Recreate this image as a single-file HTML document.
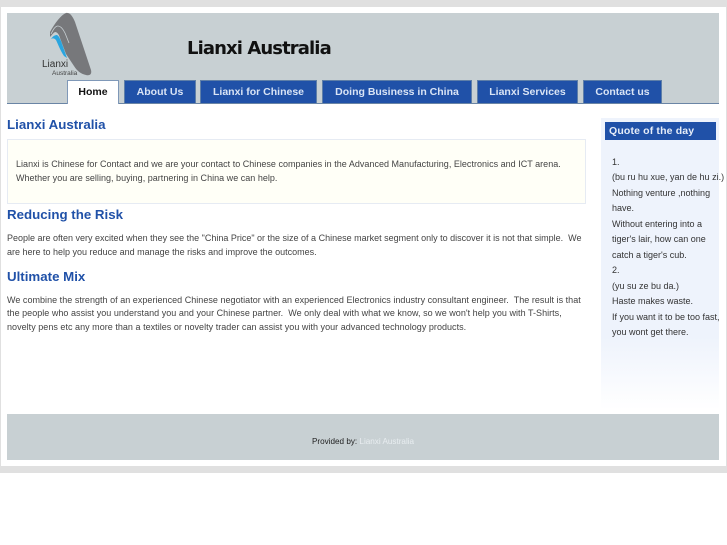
<!DOCTYPE html>
<html><head><meta charset="utf-8"><style>
html,body{margin:0;padding:0;background:#fff;}
body{width:727px;height:545px;position:relative;overflow:hidden;font-family:"Liberation Sans",sans-serif;color:#444;}
.a{position:absolute;white-space:nowrap;}
.tab{position:absolute;top:80px;height:23px;background:#2051a8;border:1px solid #5f7fa8;border-bottom:0;box-sizing:border-box;color:#d9e4f5;font:bold 10.5px/22px "Liberation Sans",sans-serif;text-align:center;}
h2{position:absolute;margin:0;left:7px;font:bold 13.3px/16px "Liberation Sans",sans-serif;color:#2051a8;white-space:nowrap;}
.t{position:absolute;left:7px;font-size:9px;line-height:15px;color:#444;white-space:nowrap;}
.s{position:absolute;left:612px;font-size:9px;line-height:15.5px;color:#333;white-space:nowrap;}
</style></head><body>
<div class="a" style="left:0;top:0;width:727px;height:473px;background:#e0e0e0"></div>
<div class="a" style="left:1px;top:7px;width:725px;height:459px;background:#fff"></div>
<div class="a" style="left:7px;top:13px;width:712px;height:90px;background:#c8d0d3"></div>
<div class="a" style="left:7px;top:103px;width:712px;height:1px;background:#6a85a5"></div>
<svg class="a" style="left:40px;top:12px" width="54" height="66" viewBox="0 0 54 66">
<path d="M10 20C15 11 21 3 26 1C30 0 33 5 35 10L51 58C52 62 50 64 46 63C41 62 37 59 34 54L26 42L20 26C19 22 17 20 15 20C13 21 12 23 10 25Z" fill="#77787b"/>
<path d="M11 22C13 18 15 14 18 14C21 14 23 17 25 21L29 31" fill="none" stroke="#c8d0d3" stroke-width=".8"/>
<path d="M11 27C13 24 15 23 17 23C19 24 20 27 21 29L27 46L24 44C20 38 18 32 16 28C14 26 13 26 11 27Z" fill="#2aa5df"/>
</svg>
<div class="a" style="left:42px;top:59px;font-size:10px;line-height:11px;color:#333">Lianxi</div>
<div class="a" style="left:52px;top:70px;font-size:6.5px;line-height:8px;color:#444">Australia</div>
<div class="a" style="left:187px;top:38px;font:bold 18px/22px 'DejaVu Sans',sans-serif;color:#111;letter-spacing:-.9px">Lianxi Australia</div>
<div class="tab" style="left:67px;width:52px;height:24px;background:#fff;color:#111;border-color:#7f98b8;border-bottom:0">Home</div>
<div class="tab" style="left:124px;width:72px">About Us</div>
<div class="tab" style="left:200px;width:117px">Lianxi for Chinese</div>
<div class="tab" style="left:322px;width:150px">Doing Business in China</div>
<div class="tab" style="left:477px;width:101px">Lianxi Services</div>
<div class="tab" style="left:583px;width:79px">Contact us</div>
<h2 style="top:117px">Lianxi Australia</h2>
<div class="a" style="left:7px;top:139px;width:577px;height:63px;background:#fffff7;border:1px solid #e6ebf3"></div>
<div class="t" style="left:16px;top:158px;line-height:13.5px;letter-spacing:.02px">Lianxi is Chinese for Contact and we are your contact to Chinese companies in the Advanced Manufacturing, Electronics and ICT arena.<br>Whether you are selling, buying, partnering in China we can help.</div>
<h2 style="top:207px">Reducing the Risk</h2>
<div class="t" style="top:232px;line-height:13.5px;white-space:pre">People are often very excited when they see the "China Price" or the size of a Chinese market segment only to discover it is not that simple.  We
are here to help you reduce and manage the risks and improve the outcomes.</div>
<h2 style="top:269px">Ultimate Mix</h2>
<div class="t" style="top:294px;line-height:13.4px;white-space:pre;letter-spacing:.03px">We combine the strength of an experienced Chinese negotiator with an experienced Electronics industry consultant engineer.  The result is that
the people who assist you understand you and your Chinese partner.  We only deal with what we know, so we won't help you with T-Shirts,
novelty pens etc any more than a textiles or novelty trader can assist you with your advanced technology products.</div>
<div class="a" style="left:601px;top:118px;width:118px;height:292px;background:linear-gradient(#eef3fc 0,#eef3fc 75%,#fff 100%)"></div>
<div class="a" style="left:605px;top:122px;width:111px;height:18px;background:#2051a8;color:#e6edf8;font:bold 10.5px/18px 'Liberation Sans',sans-serif;text-indent:4px;letter-spacing:.15px">Quote of the day</div>
<div class="s" style="top:154.5px">1.<br>(bu ru hu xue, yan de hu zi.)<br>Nothing venture ,nothing<br>have.<br>Without entering into a<br>tiger's lair, how can one<br>catch a tiger's cub.<br>2.<br>(yu su ze bu da.)<br>Haste makes waste.<br>If you want it to be too fast,<br>you wont get there.</div>
<div class="a" style="left:7px;top:414px;width:712px;height:46px;background:#c8d0d3"></div>
<div class="a" style="left:312px;top:436px;font-size:8.15px;line-height:12px;color:#222">Provided by: <span style="color:#e8edf0">Lianxi Australia</span></div>
</body></html>
